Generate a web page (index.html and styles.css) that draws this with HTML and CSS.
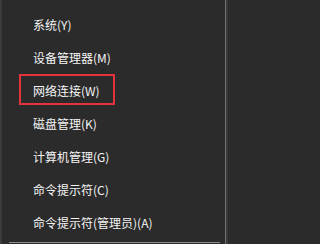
FILE: index.html
```html
<!DOCTYPE html>
<html lang="zh-CN">
<head>
<meta charset="utf-8">
<link rel="stylesheet" href="styles.css">
</head>
<body>
<div class="menu">
  <ul class="items">
    <li class="item"><span class="label">系统(Y)</span></li>
    <li class="item"><span class="label">设备管理器(M)</span></li>
    <li class="item"><span class="label marked">网络连接(W)</span></li>
    <li class="item"><span class="label">磁盘管理(K)</span></li>
    <li class="item"><span class="label">计算机管理(G)</span></li>
    <li class="item"><span class="label">命令提示符(C)</span></li>
    <li class="item"><span class="label">命令提示符(管理员)(A)</span></li>
  </ul>
  <div class="separator"></div>
</div>
</body>
</html>
```
FILE: styles.css
```css
html, body {
  margin: 0;
  padding: 0;
  background: #2b2b2b;
}
.menu {
  width: 228px;
  height: 244px;
  border-left: 2px solid #3c3c3c;
  border-right: 2px solid #3a3a3a;
  box-shadow: inset -1px 0 0 #707070;
  background: #2b2b2b;
  padding-top: 8px;
  box-sizing: border-box;
  overflow: hidden;
}
.items {
  list-style: none;
  margin: 0;
  padding: 0;
}
.item {
  height: 33px;
  display: flex;
  align-items: center;
  padding-left: 31px;
}
.label {
  font-family: "Noto Sans CJK SC", "Liberation Sans", sans-serif;
  font-size: 12px;
  color: #f4f4f4;
  line-height: 16px;
  position: relative;
}
.marked::after {
  content: "";
  position: absolute;
  left: -14px;
  right: -15px;
  top: -9px;
  bottom: -6px;
  border: 2px solid #e5333c;
}
.separator {
  height: 1px;
  background: #8a8a8a;
  margin: 3px 6px 0 7px;
}
```
